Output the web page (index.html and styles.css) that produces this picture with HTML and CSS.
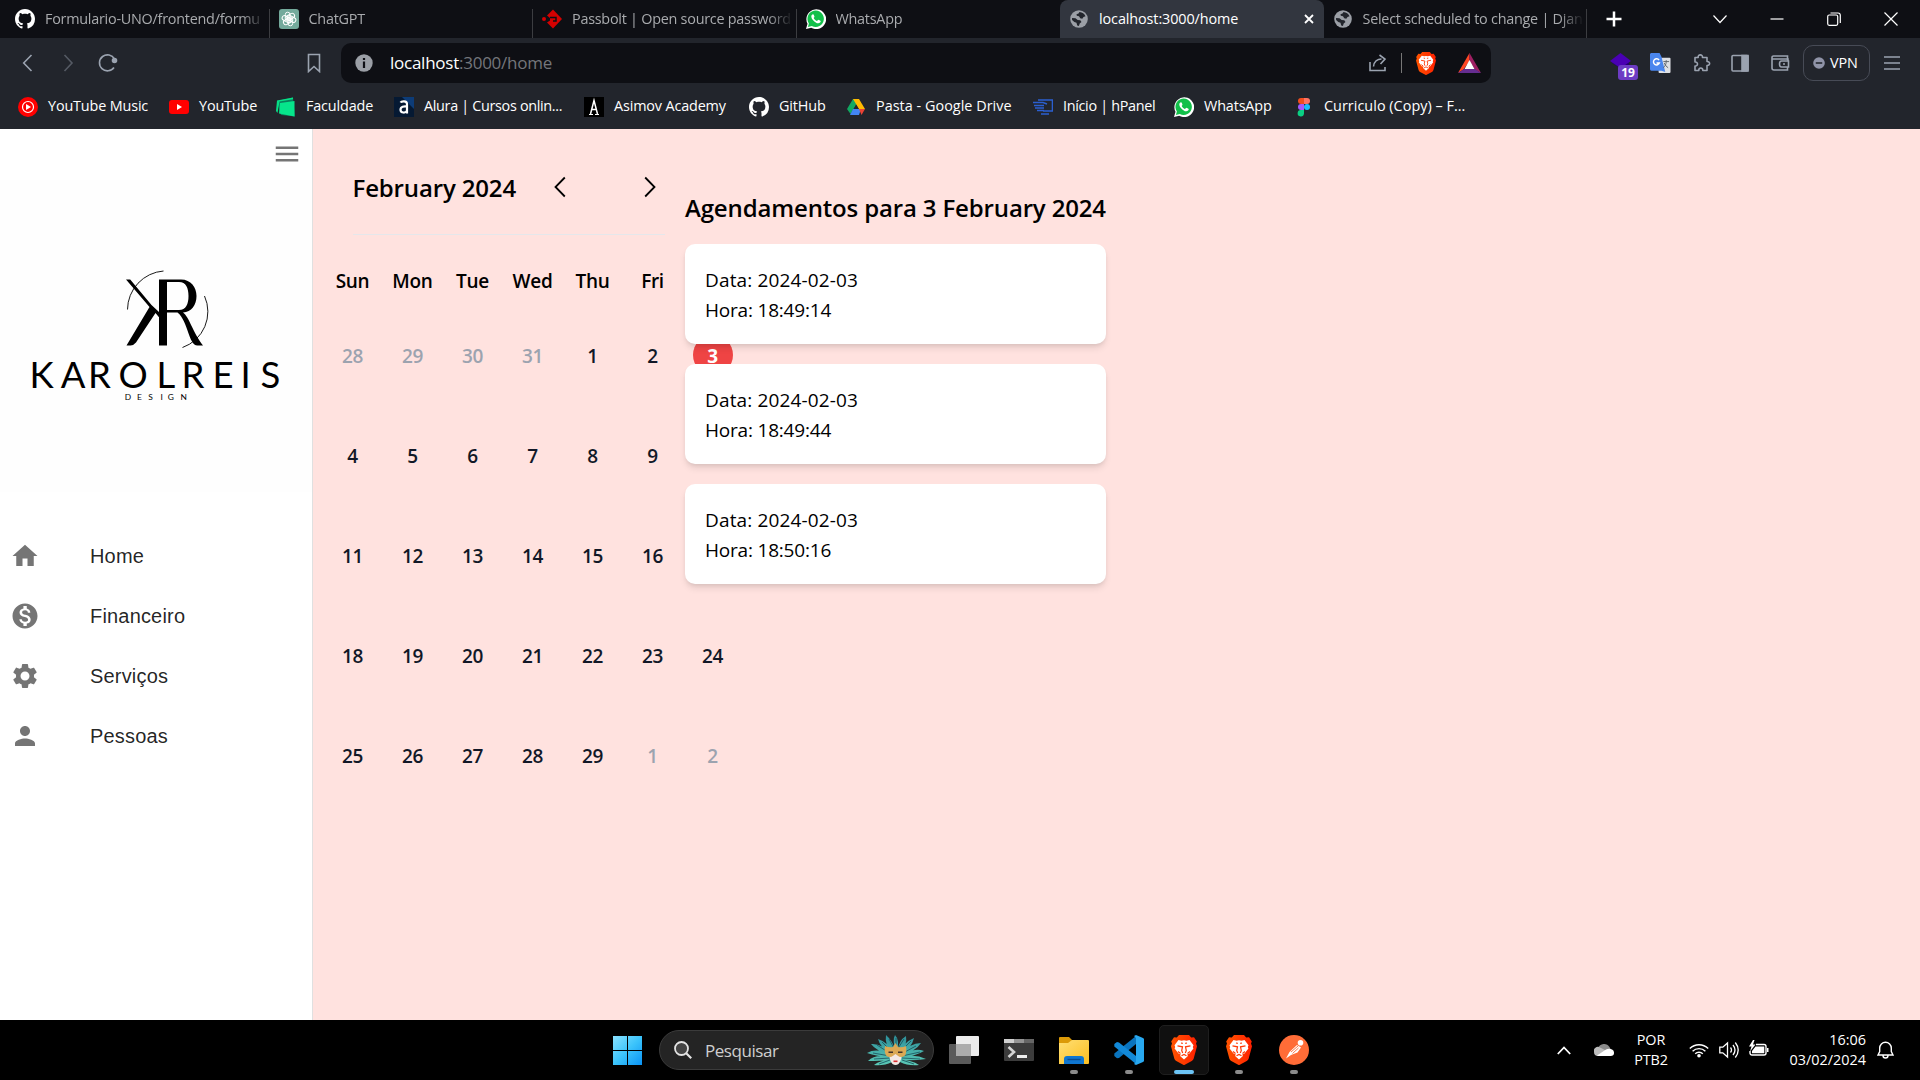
FILE: index.html
```html
<!DOCTYPE html>
<html lang="pt-BR">
<head>
<meta charset="utf-8">
<title>localhost:3000/home</title>
<link rel="stylesheet" href="styles.css">
</head>
<body>
<svg class="defs" aria-hidden="true">
  <defs>
    <linearGradient id="gBrave" x1="0" y1="0" x2="1" y2="0"><stop offset="0" stop-color="#ff5500"/><stop offset="1" stop-color="#ff2000"/></linearGradient>
    <linearGradient id="gWin" x1="0" y1="0" x2="1" y2="1"><stop offset="0" stop-color="#8ae2ff"/><stop offset=".5" stop-color="#3cc4fb"/><stop offset="1" stop-color="#0a93f5"/></linearGradient>
    <linearGradient id="gFolder" x1="0" y1="0" x2="1" y2="1"><stop offset="0" stop-color="#ffdf75"/><stop offset="1" stop-color="#fcbf20"/></linearGradient>
    <linearGradient id="gTeal" x1="0" y1="0" x2="0" y2="1"><stop offset="0" stop-color="#2c8f9a"/><stop offset="1" stop-color="#5cc9b6"/></linearGradient>
  </defs>
  <symbol id="github" viewBox="0 0 16 16"><path fill="#fff" d="M8 0C3.58 0 0 3.58 0 8c0 3.54 2.29 6.53 5.47 7.59.4.07.55-.17.55-.38 0-.19-.01-.82-.01-1.49-2.01.37-2.53-.49-2.69-.94-.09-.23-.48-.94-.82-1.13-.28-.15-.68-.52-.01-.53.63-.01 1.08.58 1.23.82.72 1.21 1.87.87 2.33.66.07-.52.28-.87.51-1.07-1.78-.2-3.64-.89-3.64-3.95 0-.87.31-1.59.82-2.15-.08-.2-.36-1.02.08-2.12 0 0 .67-.21 2.2.82.64-.18 1.32-.27 2-.27s1.36.09 2 .27c1.53-1.04 2.2-.82 2.2-.82.44 1.1.16 1.92.08 2.12.51.56.82 1.27.82 2.15 0 3.07-1.87 3.75-3.65 3.95.29.25.54.73.54 1.48 0 1.07-.01 1.93-.01 2.2 0 .21.15.46.55.38A8.01 8.01 0 0 0 16 8c0-4.42-3.58-8-8-8z"/></symbol>
  <symbol id="whatsapp" viewBox="0 0 20 20"><path fill="#fff" d="M0 20l1.500-5.200A9.900 9.900 0 1 1 5.200 18.700z"/><path fill="#12c04a" d="M1.900 18.100l1-3.700A8.200 8.200 0 1 1 5.800 17z"/><path fill="#fff" d="M7 5.200c-.6-.1-1.700.9-1.700 2.200 0 2.600 3.900 6.700 6.900 6.900 1.600 0 2.500-.9 2.500-2.200 0-.3-2.200-1.400-2.500-1.300-.4.200-.9 1.300-1.300 1.200-1.400-.5-2.600-1.600-3.200-2.900-.1-.4.800-.9.800-1.400C8.400 7.200 7.800 5.300 7 5.200z"/></symbol>
  <symbol id="globe" viewBox="0 0 18 18"><circle cx="9" cy="9" r="8.800" fill="#9b9fa6"/><path fill="#22252c" d="M9.500 2c2.800.2 5 1.900 6 4.200L13.500 7l-1.200 1.800-2.100-.5L9 6.300l-2.200-.5-.3-1.600 2-.6zM2 8l3.500.3 2.200 1.700 2.600.3 1.200 1.700-1.800 1.600-.8 2.400-1.700-.4-.7-2.800-2.200-.8-2.200-2z"/></symbol>
  <symbol id="brave" viewBox="0 0 26 30"><path fill="url(#gBrave)" d="M8 0h10l2.200 2.500 2.800-.3 2.800 4.300-.8 2 1 2.700-3.300 12.300c-.3 1.200-1.200 2-2 2.600L13.800 29.800a1.500 1.500 0 0 1-1.600 0L5.300 26.100c-.9-.6-1.700-1.400-2-2.600L0 11.200l1-2.700-.8-2L3 2.200l2.800.3z"/><path fill="#fff" d="M7.500 5l3 .7 2.500-.4 2.500.4 3-.7 4 5.200-.7 1.800.6 1.500-3.900 5-2.300.9.700 1.600-3.900 3.500L9.100 21l.7-1.600-2.300-.9-3.900-5 .6-1.500-.7-1.800z"/><path fill="none" stroke="#ff3a08" stroke-width="1.200" d="M6.500 10.800l5 1-.8 3.700 1 2.500M19.500 10.800l-5 1 .8 3.700-1 2.500M10 8l1.800.3M16 8l-1.800.3M10.500 20.700l2.500-1.300 2.500 1.300M7 16.500l2.500 2M19 16.500l-2.500 2"/></symbol>
</svg>

<header class="browser">
  <div class="tabs">
    <div class="tab"><svg class="fav"><use href="#github"/></svg><span class="tab-label">Formulario-UNO/frontend/formu</span></div>
    <div class="tab"><svg class="fav" viewBox="0 0 20 20"><rect width="20" height="20" rx="3" fill="#74aa9c"/><g fill="none" stroke="#fff" stroke-width="1"><rect x="6.300" y="3.200" width="4.800" height="9" rx="2.400" id="petal"/><use href="#petal" transform="rotate(60 10 10)"/><use href="#petal" transform="rotate(120 10 10)"/><use href="#petal" transform="rotate(180 10 10)"/><use href="#petal" transform="rotate(240 10 10)"/><use href="#petal" transform="rotate(300 10 10)"/></g></svg><span class="tab-label">ChatGPT</span></div>
    <div class="tab"><svg class="fav" viewBox="0 0 20 20"><path fill="#d40101" d="M5 6.500L11 .5l9 9.500-9 9.500-6-6 3-2V9z"/><circle cx="2" cy="10" r="2" fill="#d40101"/><path d="M8 8.500h6v3.500h-3" fill="none" stroke="#0e0f14" stroke-width="1.500"/></svg><span class="tab-label">Passbolt | Open source password</span></div>
    <div class="tab before-active"><svg class="fav"><use href="#whatsapp"/></svg><span class="tab-label">WhatsApp</span></div>
    <div class="tab active"><svg class="fav globe"><use href="#globe"/></svg><span class="tab-label">localhost:3000/home</span><svg class="tab-close" viewBox="0 0 10 10"><path d="M1 1l8 8M9 1L1 9" stroke="#fff" stroke-width="1.800"/></svg></div>
    <div class="tab"><svg class="fav globe"><use href="#globe"/></svg><span class="tab-label">Select scheduled to change | Djan</span></div>
    <svg class="new-tab" viewBox="0 0 16 16"><path d="M8 .5v15M.5 8h15" stroke="#fff" stroke-width="2.500"/></svg>
    <div class="window-controls">
      <svg viewBox="0 0 14 14"><path d="M.5 3.500L7 10.500l6.500-7" /></svg>
      <svg viewBox="0 0 14 14"><path d="M.5 7h13"/></svg>
      <svg viewBox="0 0 14 14"><rect x=".7" y="3" width="10" height="10.300" rx="1.500"/><path d="M3.500 1h7.500a2.300 2.300 0 0 1 2.300 2.300V11"/></svg>
      <svg viewBox="0 0 14 14"><path d="M.5.500l13 13M13.500.5l-13 13"/></svg>
    </div>
  </div>

  <div class="toolbar">
    <svg class="ico back" viewBox="0 0 20 20"><path d="M13.500 2l-7.800 8 7.800 8"/></svg>
    <svg class="ico forward" viewBox="0 0 20 20"><path d="M6.500 2l7.500 8-7.500 8"/></svg>
    <svg class="ico reload" viewBox="0 0 20 20"><path d="M16 14.500A8 8 0 1 1 16.500 6"/><circle cx="16.500" cy="7.500" r="2" class="solid"/></svg>
    <svg class="ico mark" viewBox="0 0 20 20"><path d="M4.500 1.500h11v17L10 13.500l-5.500 5z"/></svg>
    <div class="address">
      <svg class="info" viewBox="0 0 18 18"><circle cx="9" cy="9" r="8.700" fill="#9b9fa6"/><path d="M9 4v2M9 7.500v6.500" stroke="#0e0f14" stroke-width="2.200"/></svg>
      <span class="url"><b>localhost</b>:3000/home</span>
      <svg class="ico share" viewBox="0 0 20 20"><path d="M2 9v8.500h15V14M5.500 13.500c.5-5 4-7.500 8-7.500M11.500 2l5.500 4-4.500 5"/></svg>
      <i class="divider"></i>
      <svg class="shield"><use href="#brave"/></svg>
      <svg class="bat" viewBox="0 0 23 20"><path fill="#ff4724" d="M11.500 0L0 20l5.500-3.500 6-8.500z"/><path fill="#9e1f63" d="M11.500 0L23 20l-6-3.500-5.500-8.500z"/><path fill="#662d91" d="M0 20h23l-6-4H6z"/><path fill="#fff" d="M11.500 7l5 9h-10z"/></svg>
    </div>
    <div class="ext"><svg viewBox="0 0 21 16"><path fill="#22006b" d="M2 6h17v6l-7 4-10-6z"/><path fill="#4a00b4" d="M10.500 0L21 8l-10.500 7L0 8z"/></svg><span class="badge">19</span></div>
    <svg class="translate" viewBox="0 0 22 22"><rect x="9" y="5" width="12.500" height="16" rx="1" fill="#dfe1e5"/><path fill="#4a86ee" d="M1 0h9l2 4 4 16-4-1.500H1.500A1.500 1.500 0 0 1 0 17V1z"/><path d="M14 9h6M17 7.500V9c0 3-1.500 5-3 6.500M15 10.500c1 2.500 2.500 4 4 5" fill="none" stroke="#60666d"/><path d="M9.500 7.500a3.200 3.200 0 1 0 .3 3H6.800" fill="none" stroke="#fff" stroke-width="1.500"/></svg>
    <svg class="ico puzzle" viewBox="0 0 20 20"><path d="M4 4.500h3.200C6.500 1 12 1 11.500 4.500H16v4c3.500-.2 3.500 4.200 0 4V17.500h-4.200c.3-3.300-4.300-3.300-4 0H4v-4.500c3.300.5 3.300-4.500 0-4z" stroke-linejoin="round"/></svg>
    <svg class="ico panel" viewBox="0 0 20 20"><rect x="2" y="2.500" width="16" height="15.500" rx="1"/><path class="solid" d="M12 2.500h6v15.500h-6z"/></svg>
    <svg class="ico wallet" viewBox="0 0 20 20"><path d="M17.500 7V3h-14a1.500 1.500 0 0 0-1.500 1.500V15a2 2 0 0 0 2 2h13.500v-3M2.500 6h15.500v2M11.500 8h7v6h-7c-1.500 0-2-1.500-2-3s.5-3 2-3zM13 11h2"/></svg>
    <div class="vpn"><svg viewBox="0 0 13 13"><circle cx="6.500" cy="6.500" r="6.300" fill="#9094a8"/><path d="M3 6.500h7" stroke="#22252c" stroke-width="1.700"/></svg><span>VPN</span></div>
    <svg class="ico menu" viewBox="0 0 20 20"><path d="M2 4h16M2 10h16M2 16h16"/></svg>
  </div>

  <nav class="bookmarks">
    <a><svg class="fav" viewBox="0 0 20 20"><circle cx="10" cy="10" r="10" fill="#f00"/><circle cx="10" cy="10" r="5.500" fill="none" stroke="#fff" stroke-width="1.200"/><path d="M8 7l5 3-5 3z" fill="#fff"/></svg>YouTube Music</a>
    <a><svg class="fav" viewBox="0 0 20 20"><rect y="3" width="20" height="14" rx="3" fill="#f00"/><path d="M8 7l5 3-5 3z" fill="#fff"/></svg>YouTube</a>
    <a><svg class="fav" viewBox="0 0 20 20"><path d="M1 4L17 .5l2 19-14-1.500z" fill="#087f5c"/><path d="M1 3.500L17 .5v1.800L3.500 4.500 1.500 16 0 14z" fill="#06df86"/><path d="M4 6l14.500-2v15.500L3 16.500z" fill="#06e58b"/></svg>Faculdade</a>
    <a class="tight"><svg class="fav" viewBox="0 0 20 20"><rect width="20" height="20" fill="#051933"/><path d="M8 0h12v12z" fill="#0d3c78"/><path d="M6.500 5.500c1-1.500 6.500-2 6.500 1.500v9.500M13 9.500c-3-.5-6.500 0-6.500 3.300 0 3.500 5.500 3.500 6.500.700M9 5" fill="none" stroke="#fff" stroke-width="2.200"/></svg>Alura | Cursos onlin...</a>
    <a><svg class="fav" viewBox="0 0 20 20"><rect width="20" height="20" fill="#000"/><path d="M6.500 17L10 3.500 13.500 17M7 12.500h6" fill="none" stroke="#fff" stroke-width="1.500"/><path d="M5 17.500h4M11 17.500h4" stroke="#fff"/></svg>Asimov Academy</a>
    <a><svg class="fav"><use href="#github"/></svg>GitHub</a>
    <a class="loose"><svg class="fav" viewBox="0 0 20 20"><path fill="#11a861" d="M7 2h3l1.500 4L4.500 17 1 12z"/><path fill="#ffba00" d="M7 2h6l6 10h-6z"/><path fill="#4285f4" d="M7 12h8l-2 6H4z"/><path fill="#ea4335" d="M13 12h6l-3.500 6z"/><path fill="#22252c" d="M10 7.500l2.500 4.500h-5z"/></svg>Pasta - Google Drive</a>
    <a class="tight"><svg class="fav" viewBox="0 0 20 20"><path d="M5 3h14.500v11H10M0 5.500h10l4 1.500M1 8.500h10M2 11h9M4 13.500h7M8 17h8" fill="none" stroke="#2b5fd0" stroke-width="1.600"/></svg>Início | hPanel</a>
    <a><svg class="fav"><use href="#whatsapp"/></svg>WhatsApp</a>
    <a class="loose"><svg class="fav" viewBox="0 0 20 20"><path fill="#f24e1e" d="M10 1v6H7a3 3 0 0 1 0-6z"/><path fill="#ff7262" d="M10 1h3a3 3 0 0 1 0 6h-3z"/><path fill="#a259ff" d="M10 7v6H7a3 3 0 0 1 0-6z"/><circle cx="13" cy="10" r="3" fill="#1abcfe"/><path fill="#0acf83" d="M10 13v3.500A3.200 3.200 0 1 1 7 13z"/></svg>Curriculo (Copy) – F...</a>
  </nav>
</header>

<div class="page">
  <aside class="sidebar">
    <div class="drawer-head"><svg class="mui" viewBox="0 0 24 24"><path d="M3 18h18v-2H3zm0-5h18v-2H3zm0-7v2h18V6z"/></svg></div>
    <svg class="logo" viewBox="0 0 312 312">
      <g fill="none" stroke="#000" stroke-width=".9"><path d="M127.500 129.500A39 39 0 0 1 163.500 91"/><path d="M204.500 116A38 38 0 0 1 182.500 167.500"/></g>
      <path d="M126 99.500h4.200L151.500 125 159 132v5.200L155.500 133 136 162.500q-2.500 3-5.500 3H126.500L149.500 127z"/>
      <path fill-rule="evenodd" d="M159 99.500h22c10 0 15.500 8 15.500 16.500 0 9-5 16-13.500 16.500 6 4 10 20 20 33h-5.500c-9 0-9-24-20-33H167v33h-8zM167 102v28h12c7 0 9.500-6 9.500-14s-2.500-14-9.500-14z"/>
      <text class="brand" y="208" x="29.500 60.800 88 118.500 156.500 181.500 212.500 240.500 260.500">KAROLREIS</text>
      <text class="brand-sub" y="219.700" x="124.700 137 148.300 160.500 167.800 180.400">DESIGN</text>
    </svg>
    <ul class="nav">
      <li><svg class="mui" viewBox="0 0 24 24"><path d="M10 20v-6h4v6h5v-8h3L12 3 2 12h3v8z"/></svg>Home</li>
      <li><svg class="mui" viewBox="0 0 24 24"><path d="M12 2C6.480 2 2 6.480 2 12s4.480 10 10 10 10-4.480 10-10S17.520 2 12 2zm1.410 16.090V20h-2.670v-1.930c-1.710-.36-3.160-1.460-3.270-3.400h1.960c.1 1.050.82 1.870 2.650 1.870 1.960 0 2.400-.98 2.400-1.590 0-.83-.44-1.610-2.670-2.140-2.480-.6-4.180-1.620-4.180-3.670 0-1.720 1.390-2.840 3.110-3.210V4h2.670v1.950c1.860.45 2.790 1.860 2.850 3.390H14.300c-.05-1.110-.64-1.870-2.220-1.870-1.500 0-2.400.68-2.400 1.640 0 .84.65 1.390 2.670 1.910s4.180 1.390 4.180 3.910c-.01 1.830-1.380 2.830-3.120 3.160z"/></svg>Financeiro</li>
      <li><svg class="mui" viewBox="0 0 24 24"><path d="M19.140 12.940c.04-.3.06-.61.06-.94 0-.32-.02-.64-.07-.94l2.030-1.580c.18-.14.23-.41.12-.61l-1.920-3.320c-.12-.22-.37-.29-.59-.22l-2.390.96c-.5-.38-1.030-.7-1.620-.94l-.36-2.540c-.04-.24-.24-.41-.48-.41h-3.840c-.24 0-.43.17-.47.41l-.36 2.540c-.59.24-1.130.57-1.620.94l-2.390-.96c-.22-.08-.47 0-.59.22L2.740 8.870c-.12.21-.08.47.12.61l2.030 1.580c-.05.3-.09.63-.09.94s.02.64.07.94l-2.030 1.580c-.18.14-.23.41-.12.61l1.920 3.320c.12.22.37.29.59.22l2.390-.96c.5.38 1.030.7 1.620.94l.36 2.540c.05.24.24.41.48.41h3.840c.24 0 .44-.17.47-.41l.36-2.540c.59-.24 1.130-.56 1.620-.94l2.390.96c.22.08.47 0 .59-.22l1.920-3.320c.12-.22.07-.47-.12-.61zM12 15.600c-1.980 0-3.600-1.620-3.600-3.600s1.620-3.600 3.600-3.600 3.600 1.620 3.600 3.600-1.620 3.600-3.600 3.600z"/></svg>Serviços</li>
      <li><svg class="mui" viewBox="0 0 24 24"><path d="M12 12c2.210 0 4-1.790 4-4s-1.790-4-4-4-4 1.790-4 4 1.790 4 4 4zm0 2c-2.670 0-8 1.340-8 4v2h16v-2c0-2.660-5.330-4-8-4z"/></svg>Pessoas</li>
    </ul>
  </aside>

  <main class="main">
    <section class="calendar">
      <div class="month-bar">
        <h1>February 2024</h1>
        <svg class="chev prev" viewBox="0 0 12 22"><path d="M10.800 1.500L1.500 11l9.300 9.500"/></svg>
        <svg class="chev" viewBox="0 0 12 22"><path d="M1.200 1.500l9.300 9.500-9.300 9.500"/></svg>
      </div>
      <div class="week"><span>Sun</span><span>Mon</span><span>Tue</span><span>Wed</span><span>Thu</span><span>Fri</span></div>
      <div class="days">
        <span class="off">28</span><span class="off">29</span><span class="off">30</span><span class="off">31</span><span>1</span><span>2</span><span class="selected">3</span>
        <span>4</span><span>5</span><span>6</span><span>7</span><span>8</span><span>9</span><span></span>
        <span>11</span><span>12</span><span>13</span><span>14</span><span>15</span><span>16</span><span></span>
        <span>18</span><span>19</span><span>20</span><span>21</span><span>22</span><span>23</span><span>24</span>
        <span>25</span><span>26</span><span>27</span><span>28</span><span>29</span><span class="off">1</span><span class="off">2</span>
      </div>
    </section>
    <section class="agenda">
      <h2>Agendamentos para 3 February 2024</h2>
      <article class="card"><p class="date">Data: 2024-02-03</p><p>Hora: 18:49:14</p></article>
      <article class="card"><p class="date">Data: 2024-02-03</p><p>Hora: 18:49:44</p></article>
      <article class="card"><p class="date">Data: 2024-02-03</p><p>Hora: 18:50:16</p></article>
    </section>
  </main>
</div>

<footer class="taskbar">
  <svg class="start" viewBox="0 0 29 29"><path fill="url(#gWin)" d="M0 0h14v14H0zM15 0h14v14H15zM0 15h14v14H0zM15 15h14v14H15z"/></svg>
  <div class="search">
    <svg class="lens" viewBox="0 0 18 18"><circle cx="7.500" cy="7.500" r="6.500" fill="#444" stroke="#e4e4e4" stroke-width="1.800"/><path d="M12.200 12.200l5 5" stroke="#e4e4e4" stroke-width="2.200"/></svg>
    <span>Pesquisar</span>
    <svg class="mask" viewBox="0 0 60 32">
      <g fill="url(#gTeal)"><path d="M28 20Q18 12 20 1 27 7 30 18 26 6 29 1 34 6 31 18 33 6 40 2 42 12 32 20 38 8 48 4 46 14 33 21 44 9 55 9 50 17 34 22 48 13 58 17 50 22 34 24 48 19 60 25 48 27 34 26 46 26 53 31 42 32 34 28H26Q18 32 8 31 14 26 26 26 12 27 2 27 10 19 26 24 10 22 1 19 12 13 26 22 10 17 5 10 16 9 27 21 14 14 12 5 22 8 28 20z"/></g>
      <g stroke="#174f5c" stroke-width=".8" fill="none"><path d="M26 18L16 8M25 20L11 11M24 22L7 19M24 24L8 25M24 26L13 30M34 18L45 7M35 20L50 12M36 22L54 18M36 24L54 25M36 26L48 30M29 16L23 5M31 16L38 5M30 12V4"/></g>
      <path fill="#f4e9e4" d="M23 18h13q0 8-3.500 12-3 2-6 0-3.500-4-3.500-12z"/>
      <path fill="#dba954" d="M19 12q5 2 8 1l2.500-4 2.500 4q4 1 8-1 1 6-1 9.500-4 3-7.500 0l-2-1.500-2 1.500q-4 3-7.500 0-2-4-1-9.500z"/><path d="M22.500 18.300h4.500M32 18.300h4.500" stroke="#40342a" stroke-width="1.500"/><path d="M27.500 27.300h4" stroke="#d92c30" stroke-width="1.600"/>
    </svg>
  </div>
  <div class="app"><svg viewBox="0 0 30 30"><rect x="0" y="9" width="22" height="20" rx="1" fill="#5a5a5a"/><rect x="7" y="1" width="23" height="20" rx="1" fill="#ececec"/><path d="M7 9h15v12H7z" fill="#acacac"/></svg></div>
  <div class="app"><svg viewBox="0 0 30 30"><path fill="#3c3c3c" d="M0 4h30v21a1 1 0 0 1-1 1H1a1 1 0 0 1-1-1z"/><path fill="#cfcfcf" d="M0 4h10v4H0z"/><path fill="#949494" d="M10 4h10v4H10z"/><path fill="#666" d="M20 4h10v4H20z"/><path d="M4.500 12l5.500 5-5.500 5" fill="none" stroke="#d5d5d5" stroke-width="2.600"/><path d="M13 21.500h10" stroke="#eee" stroke-width="3"/></svg></div>
  <div class="app open"><svg viewBox="0 0 30 30"><path fill="#dc9a08" d="M0 3a1 1 0 0 1 1-1h9l3 3v6H0z"/><path fill="url(#gFolder)" d="M0 8h9l4-3h16a1 1 0 0 1 1 1v22a1 1 0 0 1-1 1H0z"/><path fill="#0f76d0" d="M5 29v-5a3 3 0 0 1 3-3h14a3 3 0 0 1 3 3v5z"/><path d="M8.500 24.500h13" stroke="#0a4c90" stroke-width="1.400"/></svg></div>
  <div class="app open"><svg viewBox="0 0 30 30"><path fill="#0a74be" d="M22 1v8L5 23l-2 .3L.3 21v-2.500z"/><path fill="#1289d8" d="M22 29v-8L5 7.500 3 7 .3 9v2.500z"/><path fill="#28a8f0" d="M22 0l7 3a2 2 0 0 1 1 2v20a2 2 0 0 1-1 2l-7 3-2-1 2-2V3l-2-2z"/></svg></div>
  <div class="app current"><svg><use href="#brave"/></svg></div>
  <div class="app open"><svg><use href="#brave"/></svg></div>
  <div class="app open"><svg viewBox="0 0 30 30"><circle cx="15" cy="15" r="15" fill="#ff6c37"/><circle cx="21.500" cy="7.800" r="2.800" fill="#fff"/><path fill="#fff" d="M18 10l4 2.500-3.500 5L12 20l-5 3.500 3.500-6.500z"/><path d="M12 17l7-6M13.500 18.500l6-5.500" stroke="#ff6c37" stroke-width=".9"/></svg></div>

  <div class="tray">
    <svg class="t-chev" viewBox="0 0 14 9"><path d="M.8 8L7 1.500 13.200 8" fill="none" stroke="#fff" stroke-width="1.800"/></svg>
    <svg class="t-cloud" viewBox="0 0 20 13"><path fill="#8a8a8a" d="M4 5a6.500 6.500 0 0 1 11.500-1L17 7 6 9z"/><path fill="#bcbcbc" d="M0 9a4 4 0 0 1 6-4.500l8 4L5 13H4a4 4 0 0 1-4-4z"/><path fill="#fff" d="M3 12.500l9-6c3-1.500 8-.5 8 3a3.300 3.300 0 0 1-3.300 3.500H4z"/></svg>
    <div class="lang"><span>POR</span><span>PTB2</span></div>
    <svg class="t-wifi" viewBox="0 0 20 16"><g fill="none" stroke="#fff" stroke-width="1.400"><path d="M.8 6.500a13 13 0 0 1 18.400 0M3.600 9.300a9 9 0 0 1 12.800 0M6.200 11.800a5.400 5.400 0 0 1 7.600 0"/></g><circle cx="10" cy="13.800" r="1.800" fill="#fff"/></svg>
    <svg class="t-sound" viewBox="0 0 20 18"><g fill="none" stroke="#fff" stroke-width="1.300"><path d="M.8 6.200v5.600h3L8.500 16V2L3.800 6.200zM11.500 6.500q2 2.500 0 5M14 4q4 5 0 10M16.300 1.500q5.800 7.500 0 15"/></g></svg>
    <svg class="t-batt" viewBox="0 0 20 17"><path fill="none" stroke="#fff" stroke-width="1.400" d="M7 4.500h8a2 2 0 0 1 2 2v6.500a2 2 0 0 1-2 2H3a2 2 0 0 1-2-2v-2"/><path fill="#fff" d="M7 6.500h8.300v6.700H3V11l3.500-4.500zM18 8h1.500v4H18zM4 0L0 6.500h2.500L1 11.500l5.500-7H4L5.500 0z"/></svg>
    <div class="clock"><span>16:06</span><span>03/02/2024</span></div>
    <svg class="t-bell" viewBox="0 0 17 18"><path fill="none" stroke="#fff" stroke-width="1.400" d="M1 14l1.700-3.500V7a5.800 5.800 0 0 1 11.600 0v3.500L16 14zM6 14.500a2.500 2.500 0 0 0 5 0"/></svg>
  </div>
</footer>
</body>
</html>
```
FILE: styles.css
```css
* { box-sizing: border-box; margin: 0; padding: 0; }
body { width: 1920px; height: 1080px; overflow: hidden; display: flex; flex-direction: column; font-family: "Open Sans", "Noto Sans", sans-serif; background: #000; }
svg { display: block; flex: none; }
.defs { position: absolute; width: 0; height: 0; }

/* Browser chrome */
.browser { height: 129px; flex: none; background: #22252c; color: #fff; font-size: 14.4px; }
.tabs { height: 38px; display: flex; background: #0e0f14; padding-left: 6px; }
.tab { width: 263.500px; height: 38px; flex: none; display: flex; align-items: center; padding-left: 9px; position: relative; color: #a9abae; }
.tab::after { content: ""; position: absolute; right: 0; top: 9px; bottom: 0; width: 1px; background: #3c3d41; }
.before-active::after, .active::after { display: none; }
.tab.active { background: #32363f; color: #fff; border-radius: 8px 8px 0 0; }
.fav { width: 20px; height: 20px; }
.globe { width: 18px; height: 18px; margin: 0 1px 0 1px; }
.tab-label { margin-left: 10px; width: 219px; padding-bottom: 2px; white-space: nowrap; overflow: hidden; letter-spacing: -.25px; -webkit-mask-image: linear-gradient(90deg, #000 196px, transparent 221px); }
.active .tab-label { width: 190px; letter-spacing: -.1px; -webkit-mask-image: none; }
.tab-close { width: 10px; height: 10px; margin-left: 15px; }
.new-tab { width: 16px; height: 16px; margin: 11px 0 0 19px; }
.window-controls { margin: 12px 22px 0 auto; display: flex; gap: 43px; }
.window-controls svg { width: 14px; height: 14px; fill: none; stroke: #fff; stroke-width: 1.200; }

.toolbar { height: 50px; display: flex; align-items: center; }
.ico { width: 20px; height: 20px; fill: none; stroke: #9ba3b0; stroke-width: 1.600; }
.ico .solid { fill: #9ba3b0; }
.back { margin-left: 18px; }
.forward { margin-left: 20px; stroke: #555a64; }
.reload { margin-left: 20px; }
.mark { margin-left: 186px; }
.address { width: 1150px; height: 40px; margin-left: 17px; border-radius: 10px; background: #0e0f14; display: flex; align-items: center; padding-left: 14px; }
.info { width: 18px; height: 18px; }
.url { margin-left: 17px; width: 978px; padding-bottom: 2px; font-size: 17px; color: #74767b; letter-spacing: -.25px; }
.url b { font-weight: 400; color: #fff; }
.divider { width: 1px; height: 20px; background: #777; margin: 0 14px 0 13px; }
.shield { width: 20px; height: 23px; }
.bat { width: 23px; height: 20px; margin-left: 22px; }
.ext { margin-left: 119px; width: 28px; height: 28px; position: relative; }
.ext svg { width: 21px; height: 16px; margin-top: 4px; }
.badge { position: absolute; left: 8px; top: 16px; width: 20px; height: 15px; border-radius: 3px; background: #6d3cc4; font: 700 12px/15px "Open Sans", sans-serif; text-align: center; }
.translate { width: 21px; height: 21px; margin-left: 12px; }
.puzzle { margin-left: 20px; }
.panel { margin-left: 19px; }
.wallet { margin-left: 20px; }
.vpn { width: 67px; height: 36px; margin-left: 13px; border: 1px solid #474b56; border-radius: 10px; display: flex; align-items: center; padding-left: 9px; gap: 5px; letter-spacing: -.1px; }
.vpn span { padding-bottom: 1px; }
.vpn svg { width: 12px; height: 12px; }
.menu { margin-left: 12px; }

.bookmarks { height: 37px; display: grid; grid-template-columns: 151px 107px 118px 190px 165px 97px 187px 141px 120px auto; padding-left: 18px; align-items: center; letter-spacing: -.15px; line-height: 18px; }
.bookmarks a { display: flex; align-items: center; gap: 10px; white-space: nowrap; height: 22px; padding-bottom: 2px; }
.bookmarks .fav { position: relative; top: 1px; }
.bookmarks .tight { letter-spacing: -.32px; }
.bookmarks .loose { letter-spacing: .03px; }

/* Page */
.page { flex: 1; display: flex; min-height: 0; }
.sidebar { width: 313px; flex: none; background: #fff; border-right: 1px solid #e0e0e0; }
.mui { width: 30px; height: 30px; fill: #757575; }
.drawer-head { height: 51px; padding: 10px 10px 0 0; display: flex; justify-content: flex-end; }
.logo { width: 312px; height: 312px; background: #fefefe; }
.brand { font: 400 36.500px Lato, sans-serif; }
.brand-sub { font: 400 8.400px Lato, sans-serif; }
.nav { list-style: none; margin-top: 34px; }
.nav li { height: 60px; display: flex; align-items: center; gap: 50px; padding-left: 10px; font: 20px "Liberation Sans", Arial, sans-serif; letter-spacing: .18px; color: rgba(0,0,0,.87); }

.main { flex: 1; background: #ffe2df; display: flex; }
.calendar { width: 372px; flex: none; padding-left: 9.500px; color: #000; }
.month-bar { height: 106px; width: 312px; margin-left: 30px; padding-top: 41px; border-bottom: 1px solid #e5e7eb; display: flex; align-items: flex-start; }
h1, h2 { font-size: 24px; line-height: 35px; font-weight: 600; letter-spacing: -.15px; white-space: nowrap; }
h1 { width: 201px; }
.chev { width: 12px; height: 22px; margin-top: 6px; fill: none; stroke: #000; stroke-width: 1.800; }
.prev { margin-right: 78px; }
.week, .days { display: grid; grid-template-columns: repeat(7, 60px); text-align: center; font-size: 19px; font-weight: 600; letter-spacing: -.3px; }
.week { height: 70px; align-items: end; line-height: 48px; }
.days { margin-top: 30px; grid-auto-rows: 100px; justify-items: center; line-height: 43px; color: #111827; }
.days span { width: 40px; height: 40px; }
.days .off { color: #9ca3af; }
.days .selected { background: #ef4444; color: #fff; border-radius: 50%; font-weight: 700; }
.agenda { width: 421px; padding-top: 61px; position: relative; }
.agenda h2 { margin-bottom: 19px; }
.card { height: 100px; margin-bottom: 20px; padding: 21px 20px 19px; border-radius: 10px; background: #fff; box-shadow: 0 5px 7.500px -1px rgba(0,0,0,.1), 0 2.500px 5px -2.500px rgba(0,0,0,.1); font-size: 19px; line-height: 30px; letter-spacing: -.2px; }
.date { letter-spacing: .15px; }

/* Taskbar */
.taskbar { height: 60px; flex: none; background: #000; color: #fff; display: flex; align-items: center; padding-left: 613px; }
.start { width: 29px; height: 29px; }
.search { width: 275px; height: 40px; margin: 0 3px 0 17px; border-radius: 20px; background: #242424; border: 1px solid #3b3b3b; display: flex; align-items: center; padding-left: 14px; font-size: 17px; color: #cfcfcf; }
.lens { width: 18px; height: 18px; }
.search span { margin-left: 13px; width: 161px; letter-spacing: -.45px; }
.mask { width: 60px; height: 32px; }
.app { width: 50px; height: 50px; margin-left: 2px; margin-right: 3px; border-radius: 5px; padding: 10px; position: relative; flex: none; }
.app svg { width: 30px; height: 30px; }
.open::after, .current::after { content: ""; position: absolute; bottom: 1px; left: 21px; width: 8px; height: 4px; border-radius: 2px; background: #8b8b8b; }
.current { background: #101010; border: 1px solid #1e1e1e; padding: 9px; }
.current::after { left: 14px; width: 20px; bottom: 0; background: #6cc4f5; }
.tray { margin-left: auto; margin-right: 26px; display: flex; align-items: center; font-size: 14.400px; line-height: 20px; }
.t-chev { width: 14px; height: 9px; }
.t-cloud { width: 20px; height: 13px; margin-left: 23px; margin-top: -2px; }
.lang { width: 36px; margin-left: 19px; display: flex; flex-direction: column; align-items: center; letter-spacing: -.1px; }
.t-wifi { width: 20px; height: 16px; margin-left: 20px; margin-top: -1px; }
.t-sound { width: 20px; height: 18px; margin-left: 10px; margin-top: -1px; }
.t-batt { width: 20px; height: 17px; margin: -3px 0 0 10px; }
.clock { width: 97px; margin-right: 1px; display: flex; flex-direction: column; align-items: flex-end; letter-spacing: 0; margin-bottom: 1px; }
.t-bell { width: 17px; height: 18px; margin-left: 10px; }
```
